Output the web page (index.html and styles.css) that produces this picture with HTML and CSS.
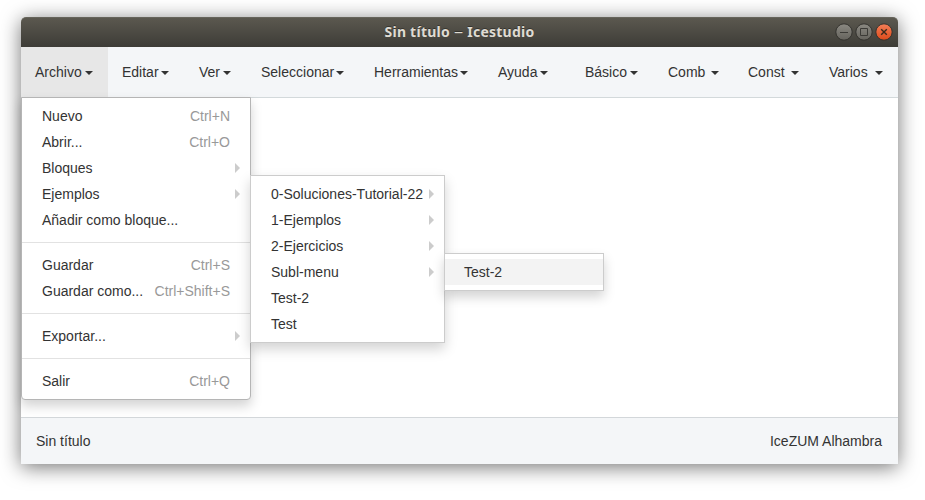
FILE: index.html
```
<!DOCTYPE html>
<html lang="es">
<head>
<meta charset="utf-8">
<title>Sin título – Icestudio</title>
<link rel="stylesheet" href="styles.css">
</head>
<body>
<div class="window">
  <header class="titlebar">
    <h1 class="title"><span>Sin título</span><span class="dash">–</span><span>Icestudio</span></h1>
    <div class="controls">
      <svg class="control" viewBox="0 0 18 18"><defs><linearGradient id="gray" x1="0" y1="0" x2="0" y2="1"><stop offset="0" stop-color="#8b8982"/><stop offset="1" stop-color="#65635d"/></linearGradient></defs><circle class="disc" cx="9" cy="9" r="8.2" fill="url(#gray)"/><path class="glyph" d="M5 9.5h8"/></svg>
      <svg class="control" viewBox="0 0 18 18"><circle class="disc" cx="9" cy="9" r="8.2" fill="url(#gray)"/><path class="glyph" d="M5.5 5.5h7v7h-7z"/></svg>
      <svg class="control" viewBox="0 0 18 18"><defs><linearGradient id="orange" x1="0" y1="0" x2="0" y2="1"><stop offset="0" stop-color="#f47f58"/><stop offset="1" stop-color="#dd4a1a"/></linearGradient></defs><circle class="disc" cx="9" cy="9" r="8.2" fill="url(#orange)"/><path class="glyph dark" d="M6.2 6.2l5.6 5.6M11.8 6.2l-5.6 5.6"/></svg>
    </div>
  </header>
  <nav class="navbar">
    <div class="nav-item open"><span>Archivo</span><i class="caret"></i>
      <div class="menu main-menu">
        <div class="item"><span>Nuevo</span><kbd>Ctrl+N</kbd></div>
        <div class="item"><span>Abrir...</span><kbd>Ctrl+O</kbd></div>
        <div class="item parent"><span>Bloques</span></div>
        <div class="item parent"><span>Ejemplos</span>
          <div class="menu sub-menu">
            <div class="item parent"><span>0-Soluciones-Tutorial-22</span></div>
            <div class="item parent"><span>1-Ejemplos</span></div>
            <div class="item parent"><span>2-Ejercicios</span></div>
            <div class="item parent"><span>Subl-menu</span>
              <div class="menu leaf-menu">
                <div class="item hover"><span>Test-2</span></div>
              </div>
            </div>
            <div class="item"><span>Test-2</span></div>
            <div class="item"><span>Test</span></div>
          </div>
        </div>
        <div class="item"><span>Añadir como bloque...</span></div>
        <div class="divider"></div>
        <div class="item"><span>Guardar</span><kbd>Ctrl+S</kbd></div>
        <div class="item"><span>Guardar como...</span><kbd>Ctrl+Shift+S</kbd></div>
        <div class="divider"></div>
        <div class="item parent"><span>Exportar...</span></div>
        <div class="divider"></div>
        <div class="item"><span>Salir</span><kbd>Ctrl+Q</kbd></div>
      </div>
    </div>
    <div class="nav-item snug"><span>Editar</span><i class="caret"></i></div>
    <div class="nav-item snug"><span>Ver</span><i class="caret"></i></div>
    <div class="nav-item snug"><span>Seleccionar</span><i class="caret"></i></div>
    <div class="nav-item snug"><span>Herramientas</span><i class="caret"></i></div>
    <div class="nav-item snug"><span>Ayuda</span><i class="caret"></i></div>
    <div></div>
    <div class="nav-item snug"><span>Básico</span><i class="caret"></i></div>
    <div class="nav-item"><span>Comb</span><i class="caret"></i></div>
    <div class="nav-item"><span>Const</span><i class="caret"></i></div>
    <div class="nav-item last"><span>Varios</span><i class="caret"></i></div>
  </nav>
  <main class="canvas"></main>
  <footer class="footer"><span>Sin título</span><span>IceZUM Alhambra</span></footer>
</div>
</body>
</html>
```
FILE: styles.css
```
* { box-sizing: border-box; }
body {
  margin: 0;
  padding: 17px 27px 36px 21px;
  height: 500px;
  overflow: hidden;
  background: #fff;
  color: #333;
  font: 14px/20px "Liberation Sans", Arial, sans-serif;
}
.window {
  height: 447px;
  display: flex;
  flex-direction: column;
  border-radius: 5px 5px 0 0;
  background: #fff;
  box-shadow: 0 3px 20px rgba(0, 0, 0, .55);
}
.titlebar {
  height: 30px;
  flex: none;
  display: grid;
  grid-template-columns: 1fr auto 1fr;
  align-items: center;
  border-radius: 5px 5px 0 0;
  background: linear-gradient(#5b584f, #3d3c37);
  border-top: 1px solid #66645b;
}
.title {
  grid-column: 2;
  display: flex;
  gap: 4px;
  margin: 0;
  padding-bottom: 2px;
  color: #dfdbd2;
  font: 700 14px/26px "Noto Sans", "Open Sans", sans-serif;
  letter-spacing: .25px;
  text-shadow: 0 -1px 0 rgba(0, 0, 0, .35);
}
.dash { font-weight: 400; padding: 0 1px; transform: scaleX(1.3); }
.controls { display: flex; justify-content: flex-end; gap: 2px; padding: 0 5px 1px 0; }
.control { width: 18px; height: 18px; display: block; }
.disc { stroke: #33322e; }
.glyph { fill: none; stroke: #3c3b37; stroke-width: 1; }
.glyph.dark { stroke: #3a2a1c; stroke-width: 1.4; }
.navbar {
  height: 51px;
  flex: none;
  display: grid;
  grid-template-columns: 87px 77px 62px 113px 124px 80px 1fr 83px 80px 80px 84px;
  background: #f4f6f8;
  border-bottom: 1px solid #d3d9db;
}
.nav-item {
  position: relative;
  display: flex;
  align-items: center;
  justify-content: space-between;
  padding: 0 15px 0 14px;
  white-space: nowrap;
}
.nav-item.open { background: #e7e7e7; }
.nav-item.snug { padding-right: 16px; }
.nav-item.last { padding-left: 15px; }
.caret {
  margin-top: 2px;
  border: 4px solid transparent;
  border-top-color: #333;
  border-bottom: 0;
}
.menu {
  position: absolute;
  padding: 5px 0;
  background: #fff;
  border: 1px solid #ccc;
  box-shadow: 0 6px 12px rgba(0, 0, 0, .175);
}
.main-menu {
  top: 50px;
  left: 0;
  width: 230px;
  border-color: #b5b5b5;
  border-radius: 0 0 4px 4px;
  z-index: 1;
}
.sub-menu { top: -6px; left: 228px; width: 195px; }
.leaf-menu { top: -6px; left: 193px; width: 160px; }
.item {
  position: relative;
  height: 26px;
  display: flex;
  align-items: center;
  justify-content: space-between;
  padding: 0 20px;
  white-space: nowrap;
}
.item.hover { background: #f3f3f3; }
.item kbd { font: inherit; color: #999; }
.item.parent { padding-right: 10px; }
.parent::after {
  content: "";
  border: 5px solid transparent;
  border-left-color: #ccc;
  border-right: 0;
}
.divider { height: 1px; margin: 9px 0; background: #e2e2e2; }
.canvas { flex: 1; }
.leaf-menu > .item { padding-left: 19px; }
.footer {
  height: 47px;
  display: flex;
  align-items: center;
  justify-content: space-between;
  padding: 0 16px 0 15px;
  background: #f4f6f8;
  border-top: 1px solid #d3d7da;
}
```
